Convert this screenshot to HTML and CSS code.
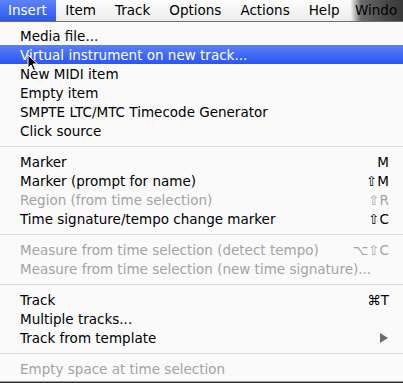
FILE: index.html
```html
<!DOCTYPE html>
<html lang="en">
<head>
  <meta charset="UTF-8">
  <title>Insert menu</title>
  <link rel="stylesheet" href="styles.css">
</head>
<body>
  <div class="menubar">
    <span class="top active">Insert</span>
    <span class="top">Item</span>
    <span class="top">Track</span>
    <span class="top">Options</span>
    <span class="top">Actions</span>
    <span class="top">Help</span>
    <span class="top window">Windo</span>
  </div>

  <div class="menu">
    <div class="item">Media file...</div>
    <div class="item selected">Virtual instrument on new track...</div>
    <div class="item">New MIDI item</div>
    <div class="item">Empty item</div>
    <div class="item">SMPTE LTC/MTC Timecode Generator</div>
    <div class="item">Click source</div>
    <div class="sep"></div>
    <div class="item">Marker<span class="key">M</span></div>
    <div class="item">Marker (prompt for name)<span class="key">⇧M</span></div>
    <div class="item off">Region (from time selection)<span class="key">⇧R</span></div>
    <div class="item">Time signature/tempo change marker<span class="key">⇧C</span></div>
    <div class="sep"></div>
    <div class="item off">Measure from time selection (detect tempo)<span class="key">⌥⇧C</span></div>
    <div class="item off">Measure from time selection (new time signature)...</div>
    <div class="sep"></div>
    <div class="item">Track<span class="key">⌘T</span></div>
    <div class="item">Multiple tracks...</div>
    <div class="item">Track from template<span class="arrow"></span></div>
    <div class="sep"></div>
    <div class="item off">Empty space at time selection</div>

    <!-- mouse pointer over the highlighted row -->
    <svg class="cursor" width="12" height="18" viewBox="0 0 12 18">
      <path d="M1 1 L1 14 L4 11 L6.5 16.5 L8.5 15.5 L6 10 L10.5 10 Z" fill="#000" stroke="#fff" stroke-width="1"/>
    </svg>
  </div>
</body>
</html>
```

FILE: styles.css
```css
body {
  margin: 0;
  width: 403px;
  height: 383px;
  overflow: hidden;
  background: #2b2b2b;
  font-family: "DejaVu Sans", Verdana, sans-serif;
  font-size: 13.5px;
  color: #000;
}
.menubar {
  display: flex;
  height: 21px;
  background: linear-gradient(#fdfdfd, #ececec);
  border-bottom: 1px solid #6d6d6d;
  overflow: hidden;
  white-space: nowrap;
}
.top {
  line-height: 21px;
  padding: 0 9.5px;
  font-size: 13.5px;
}
.top.active {
  padding: 0 9px 0 8px;
  color: #fff;
  background: linear-gradient(#5d82f8, #2c58f2);
}
.top.window {
  flex: 1;
  margin-left: 2px;
  padding-left: 4px;
  background: linear-gradient(90deg, #ededed 0, #6a6a6a 10px, #4a4a4a 60%, #333);
}
.menu {
  position: relative;
  height: 355px;
  padding: 4px 0 0;
  background: #fafafa;
  border-bottom: 1px solid #9a9a9a;
}
.item {
  display: flex;
  justify-content: space-between;
  align-items: center;
  height: 19px;
  padding: 0 14px 0 20px;
  white-space: nowrap;
}
.item.selected {
  color: #fff;
  background: linear-gradient(#5c7ff7, #2a55f1);
}
.item.off {
  color: #a3a3a3;
}
.sep {
  height: 1px;
  margin: 6px 0 5px;
  background: #dcdcdc;
}
.arrow {
  width: 0;
  height: 0;
  margin-right: 1px;
  border-top: 5px solid transparent;
  border-bottom: 5px solid transparent;
  border-left: 8px solid #6b6b6b;
}
.cursor {
  position: absolute;
  left: 27px;
  top: 32px;
}
```
